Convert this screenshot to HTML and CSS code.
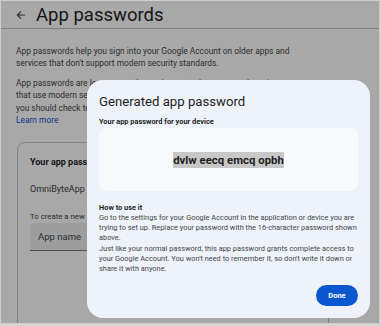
FILE: index.html
```html
<!DOCTYPE html>
<html lang="en">
<head>
    <meta charset="UTF-8">
    <meta name="viewport" content="width=device-width, initial-scale=1.0">
    <title>App passwords</title>
    <link rel="stylesheet" href="styles.css">
</head>
<body>
    <div class="frame">
        <div class="page">
            <div class="header">
                <svg class="back" width="10" height="10" viewBox="0 0 10 10">
                    <path d="M9 5H1.5M5 1.3L1.3 5L5 8.7" fill="none" stroke="#444746" stroke-width="1.1"/>
                </svg>
                <h1>App passwords</h1>
            </div>
            <div class="content">
                <p>App passwords help you sign into your Google Account on older apps and services that don't support modern security standards.</p>
                <p>App passwords are less secure than using up-to-date apps and services<br>that use modern security standards. Before you create an app password,<br>you should check to see if your app needs this in order to sign in.<br><a href="#">Learn more</a></p>
                <div class="card">
                    <div class="card-title">Your app passwords</div>
                    <div class="card-item">OmniByteApp Password</div>
                    <div class="card-hint">To create a new app specific password, type a name for it below...</div>
                    <div class="input">App name</div>
                </div>
            </div>
        </div>
        <div class="scrim"></div>
        <div class="dialog">
            <h2>Generated app password</h2>
            <div class="label">Your app password for your device</div>
            <div class="password-box">
                <span class="password">dvlw eecq emcq opbh</span>
            </div>
            <div class="howto">How to use it</div>
            <p class="desc">Go to the settings for your Google Account in the application or device you are<br>trying to set up. Replace your password with the 16-character password shown<br>above.<br>Just like your normal password, this app password grants complete access to<br>your Google Account. You won't need to remember it, so don't write it down or<br>share it with anyone.</p>
            <div class="actions">
                <button type="button">Done</button>
            </div>
        </div>
    </div>
</body>
</html>
```

FILE: styles.css
```css
body {
    margin: 0;
    font-family: Roboto, "Liberation Sans", Arial, sans-serif;
    background: #d4d4d4;
}
.frame {
    position: relative;
    width: 378px;
    height: 322px;
    border: 1px solid #cdcdcd;
    overflow: hidden;
    background: #fff;
}
.page {
    color: #444746;
}
.header {
    display: flex;
    align-items: center;
    height: 28px;
    padding-left: 15px;
    border-bottom: 1px solid #c4c7c5;
    box-sizing: border-box;
}
.back {
    margin-right: 10px;
    margin-top: 1px;
}
h1 {
    margin: 0;
    font-size: 18.5px;
    font-weight: 400;
    color: #1f1f1f;
}
.content {
    padding: 16px 15px 0 15px;
}
.content p {
    margin: 0 0 7px 0;
    font-size: 8.4px;
    line-height: 12.4px;
    width: 285px;
}
.content a {
    color: #0b57d0;
    text-decoration: none;
}
.card {
    margin-top: 16px;
    margin-left: 1px;
    width: 312px;
    height: 190px;
    border: 1px solid #c4c7c5;
    border-radius: 8px;
    padding: 12px 12px;
    box-sizing: border-box;
}
.card-title {
    font-size: 9px;
    font-weight: 700;
    color: #1f1f1f;
    margin-top: 2px;
}
.card-item {
    font-size: 9px;
    margin-top: 17px;
}
.card-hint {
    font-size: 7.8px;
    margin-top: 18px;
    white-space: nowrap;
}
.input {
    margin-top: 2px;
    height: 28px;
    width: 260px;
    background: #eeeeee;
    border-bottom: 1px solid #747775;
    border-radius: 4px 4px 0 0;
    box-sizing: border-box;
    padding-left: 8px;
    display: flex;
    align-items: center;
    font-size: 9.5px;
    color: #444746;
}
.scrim {
    position: absolute;
    inset: 0;
    background: rgba(0, 0, 0, 0.34);
}
.dialog {
    position: absolute;
    left: 86px;
    top: 79px;
    width: 283px;
    box-sizing: border-box;
    padding: 12px 12px 12px 12px;
    background: #eef2fa;
    border-radius: 16px;
    color: #444746;
}
h2 {
    margin: 0;
    font-size: 13.2px;
    line-height: 20px;
    font-weight: 400;
    color: #1f1f1f;
}
.label {
    margin-top: 5px;
    font-size: 7.4px;
    line-height: 10px;
    font-weight: 700;
    color: #1f1f1f;
}
.password-box {
    margin-top: 1px;
    height: 63px;
    background: #f8fafd;
    border-radius: 8px;
    display: flex;
    align-items: center;
    justify-content: center;
}
.password {
    font-size: 11.4px;
    font-weight: 700;
    color: #1f1f1f;
    background: #c8c8c8;
    padding: 1px 0;
}
.howto {
    margin-top: 12px;
    font-size: 7.4px;
    line-height: 10px;
    font-weight: 700;
    color: #1f1f1f;
}
.desc {
    margin: 0;
    font-size: 7.4px;
    line-height: 10.2px;
    white-space: nowrap;
}
.actions {
    display: flex;
    justify-content: flex-end;
    margin-top: 11px;
}
button {
    width: 42px;
    height: 21px;
    border: none;
    border-radius: 11px;
    background: #0b57d0;
    color: #fff;
    font-family: inherit;
    font-size: 7.5px;
    font-weight: 700;
    padding: 0;
}
```
